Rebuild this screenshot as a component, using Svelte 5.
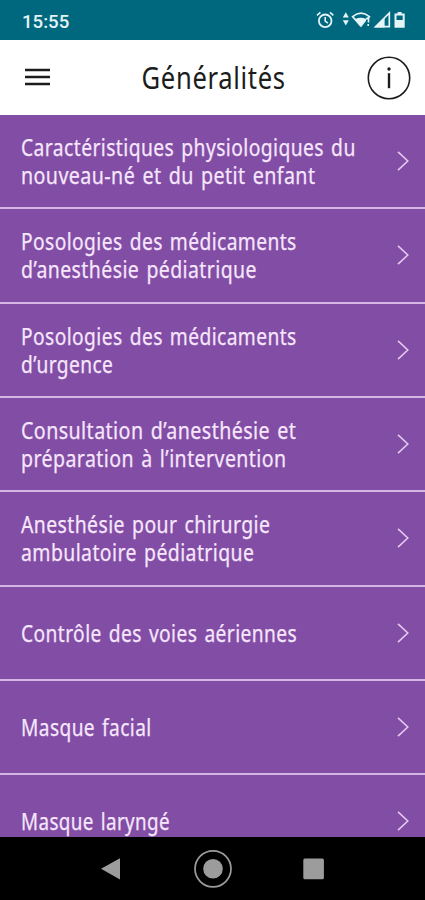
<script>
  // each label line carries the width it should take in the condensed face
  const topics = [
    [["Caractéristiques physiologiques du", 334.5], ["nouveau-né et du petit enfant", 294.5]],
    [["Posologies des médicaments", 275.5], ["d’anesthésie pédiatrique", 236]],
    [["Posologies des médicaments", 275.5], ["d’urgence", 92.5]],
    [["Consultation d’anesthésie et", 275], ["préparation à l’intervention", 266]],
    [["Anesthésie pour chirurgie", 249.5], ["ambulatoire pédiatrique", 233]],
    [["Contrôle des voies aériennes", 276]],
    [["Masque facial", 130.5]],
    [["Masque laryngé", 149.5]],
  ];

  function condense(node, width) {
    node.style.transform = `scaleX(${width / node.offsetWidth})`;
  }
</script>

<div class="screen">
  <div class="status">
    <span class="clock" use:condense={47}>15:55</span>
    <svg class="indicators" width="92" height="22" viewBox="0 0 92 22" fill="none" stroke="#e4f4f7">
      <circle cx="10.2" cy="10.8" r="6.3" stroke-width="1.8" />
      <path d="M10.2 7v4.2l2.7 1.9M2 5.4l3.4-3M18.4 5.4l-3.4-3" stroke-width="1.6" />
      <path d="M27.8 7.6l3-5.3 3 5.3zM27.8 10.2l3 5.3 3-5.3z" fill="#e4f4f7" stroke="none" />
      <path d="M46 16.2L37.6 6.6Q46 -0.2 54.4 6.6L52.6 8.6" stroke-width="1.7" />
      <path d="M40.2 9.1Q46 6.6 51 9.1V11L46 17.2z" fill="#e4f4f7" stroke="none" />
      <path d="M50.8 8.6h2.7v4M53.2 14v2" stroke-width="1.6" />
      <path d="M74.3 3V16.7H60.6z" stroke-width="1.7" />
      <path d="M69.6 7.4V17.4H59.5z" fill="#e4f4f7" stroke="none" />
      <path d="M80.5 4.4h8.2v12.3h-8.2zM82.6 3.1h4" stroke-width="2" />
      <path d="M80.5 10h8v6.5h-8z" fill="#e4f4f7" stroke="none" />
    </svg>
  </div>

  <header>
    <svg class="menu" width="25" height="18" viewBox="0 0 25 18" stroke="#1c1c1c" stroke-width="2.3">
      <path d="M0 2h25M0 9h25M0 16h25" />
    </svg>
    <h1><span use:condense={144}>Généralités</span></h1>
    <svg class="info" width="44" height="44" viewBox="0 0 44 44" fill="none" stroke="#1c1c1c">
      <circle cx="22" cy="22" r="20.7" stroke-width="1.6" />
      <path d="M22 17.2V32.2" stroke-width="2.4" />
      <circle cx="22" cy="13" r="1.7" fill="#1c1c1c" stroke="none" />
    </svg>
  </header>

  <ul>
    {#each topics as lines}
      <li>
        <div class="label">
          {#each lines as [text, width]}
            <span use:condense={width}>{text}</span>
          {/each}
        </div>
        <svg width="12" height="20" viewBox="0 0 12 20" fill="none" stroke="#e3c8f1" stroke-width="1.6">
          <path d="M1 0.8L10.8 10L1 19.2" />
        </svg>
      </li>
    {/each}
  </ul>

  <nav>
    <svg width="425" height="63" viewBox="0 0 425 63" fill="#9c9c9c">
      <path d="M101 31.8L120 21.2V42.4z" />
      <circle cx="213" cy="31.8" r="18" fill="none" stroke="#9c9c9c" stroke-width="1.7" />
      <circle cx="213" cy="31.8" r="9.8" />
      <rect x="303.3" y="21.5" width="20.6" height="20.8" rx="1.5" />
    </svg>
  </nav>
</div>

<style>
  :global(body) {
    margin: 0;
  }

  .screen {
    display: flex;
    flex-direction: column;
    width: 425px;
    height: 900px;
    overflow: hidden;
    font-family: "Noto Sans", sans-serif;
    background: #824da4;
  }

  .status {
    display: flex;
    flex: none;
    align-items: center;
    justify-content: space-between;
    box-sizing: border-box;
    height: 40px;
    padding: 2px 18px 0 22px;
    background: #00687e;
  }

  .clock {
    font-family: Roboto, sans-serif;
    font-size: 19px;
    font-weight: 500;
    color: #e4f4f7;
    transform-origin: left;
  }

  header {
    display: flex;
    flex: none;
    align-items: center;
    justify-content: space-between;
    box-sizing: border-box;
    height: 75px;
    padding: 0 14.5px 0 25px;
    background: #fff;
  }

  .menu {
    margin-bottom: 1px;
  }

  h1 {
    display: flex;
    justify-content: center;
    width: 145px;
    margin: 0 0 0 10px;
    font-size: 30px;
    font-weight: 400;
    line-height: 40px;
    letter-spacing: 0.8px;
    color: #1c1c1c;
  }

  ul {
    flex: 1;
    min-height: 0;
    margin: 0;
    padding: 0;
    overflow: hidden;
    list-style: none;
  }

  li {
    display: flex;
    align-items: center;
    justify-content: space-between;
    box-sizing: border-box;
    height: 94.33px;
    padding: 0 16px 0 21px;
    border-bottom: 2px solid #d5b5e6;
  }

  li svg {
    flex: none;
  }

  .label {
    display: flex;
    flex-direction: column;
    align-items: flex-start;
    min-width: 0;
    font-size: 23px;
    line-height: 28px;
    letter-spacing: 0.5px;
    word-spacing: 2px;
    color: #f6e6fc;
    -webkit-text-stroke: 0.25px #f6e6fc;
  }

  .label span {
    white-space: nowrap;
    transform-origin: left;
  }

  nav {
    flex: none;
    height: 63px;
    background: #000;
  }

  nav svg {
    display: block;
  }
</style>
